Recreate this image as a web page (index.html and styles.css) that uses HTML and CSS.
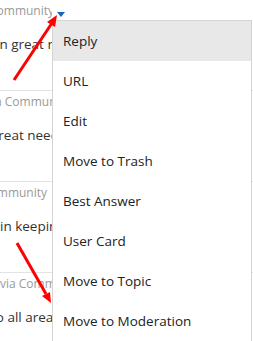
FILE: index.html
```html
<!DOCTYPE html>
<html lang="en">
<head>
    <meta charset="UTF-8">
    <meta name="viewport" content="width=device-width, initial-scale=1.0">
    <title>Post Options Menu</title>
    <link rel="stylesheet" href="styles.css">
</head>
<body>

    <!-- Lista de publicaciones (fondo) -->
    <div class="post-list">
        <div class="post">
            <div class="post-meta"><span class="shift-1">Community</span></div>
            <div class="post-text"><span class="shift-2">in great need of help with the</span></div>
        </div>
        <div class="post">
            <div class="post-meta"><span class="shift-3">via Community</span></div>
            <div class="post-text"><span class="shift-4">great need of help</span></div>
        </div>
        <div class="post">
            <div class="post-meta"><span class="shift-5">Community</span></div>
            <div class="post-text"><span class="shift-6">in keeping with the</span></div>
        </div>
        <div class="post last">
            <div class="post-meta"><span class="shift-7">via Community</span></div>
            <div class="post-text"><span class="shift-8">to all areas of the</span></div>
        </div>
    </div>

    <!-- Flecha del menu -->
    <span class="caret"></span>

    <!-- Menu desplegable -->
    <ul class="dropdown">
        <li class="active">Reply</li>
        <li>URL</li>
        <li>Edit</li>
        <li>Move to Trash</li>
        <li>Best Answer</li>
        <li>User Card</li>
        <li>Move to Topic</li>
        <li>Move to Moderation</li>
    </ul>

    <!-- Flechas rojas de anotacion -->
    <svg class="arrows" width="253" height="341" viewBox="0 0 253 341">
        <line x1="14" y1="80" x2="52" y2="23" stroke="#f00" stroke-width="3"/>
        <polygon points="57,15 47,22 55,27" fill="#f00"/>
        <line x1="17" y1="243" x2="46" y2="294" stroke="#f00" stroke-width="3"/>
        <polygon points="51,303 42,296 50,292" fill="#f00"/>
    </svg>

</body>
</html>
```

FILE: styles.css
```css
/* Estilos generales */
body {
    font-family: "Open Sans", "Noto Sans", sans-serif;
    margin: 0;
    padding: 0;
    background-color: #fff;
    color: #333;
    width: 253px;
    height: 341px;
    overflow: hidden;
    position: relative;
}
.post-list {
    width: 253px;
    height: 341px;
    overflow: hidden;
}
.post {
    height: 91px;
    border-bottom: 1px solid #e3e3e3;
    padding-top: 2px;
    box-sizing: border-box;
    white-space: nowrap;
}
.post.last {
    height: 68px;
    border-bottom: none;
}
.post-meta,
.post-text {
    width: 52px;
    overflow: hidden;
}
.post-meta {
    font-size: 12px;
    color: #9a9a9a;
    height: 18px;
    line-height: 18px;
}
.post-text {
    font-size: 13.5px;
    color: #333;
    margin-top: 14px;
    height: 20px;
    line-height: 20px;
}
.post-meta span,
.post-text span {
    display: inline-block;
}
.shift-1 { margin-left: -11px; }
.shift-2 { margin-left: -4px; }
.shift-3 { margin-left: -14px; }
.shift-4 { margin-left: -9px; }
.shift-5 { margin-left: -18px; }
.shift-6 { margin-left: 0; }
.shift-7 { margin-left: 0; }
.shift-8 { margin-left: -9px; }

.caret {
    position: absolute;
    left: 57px;
    top: 12px;
    width: 0;
    height: 0;
    border-left: 4px solid transparent;
    border-right: 4px solid transparent;
    border-top: 5px solid #1565c0;
}
.dropdown {
    position: absolute;
    left: 52px;
    top: 20px;
    width: 198px;
    margin: 0;
    padding: 0;
    list-style: none;
    background-color: #fff;
    border: 1px solid #d4d4d4;
    border-bottom: none;
}
.dropdown li {
    height: 40px;
    line-height: 40px;
    padding-left: 10px;
    font-size: 13.5px;
    color: #222;
}
.dropdown li.active {
    background-color: #e8e8e8;
}
.arrows {
    position: absolute;
    left: 0;
    top: 0;
}
```
